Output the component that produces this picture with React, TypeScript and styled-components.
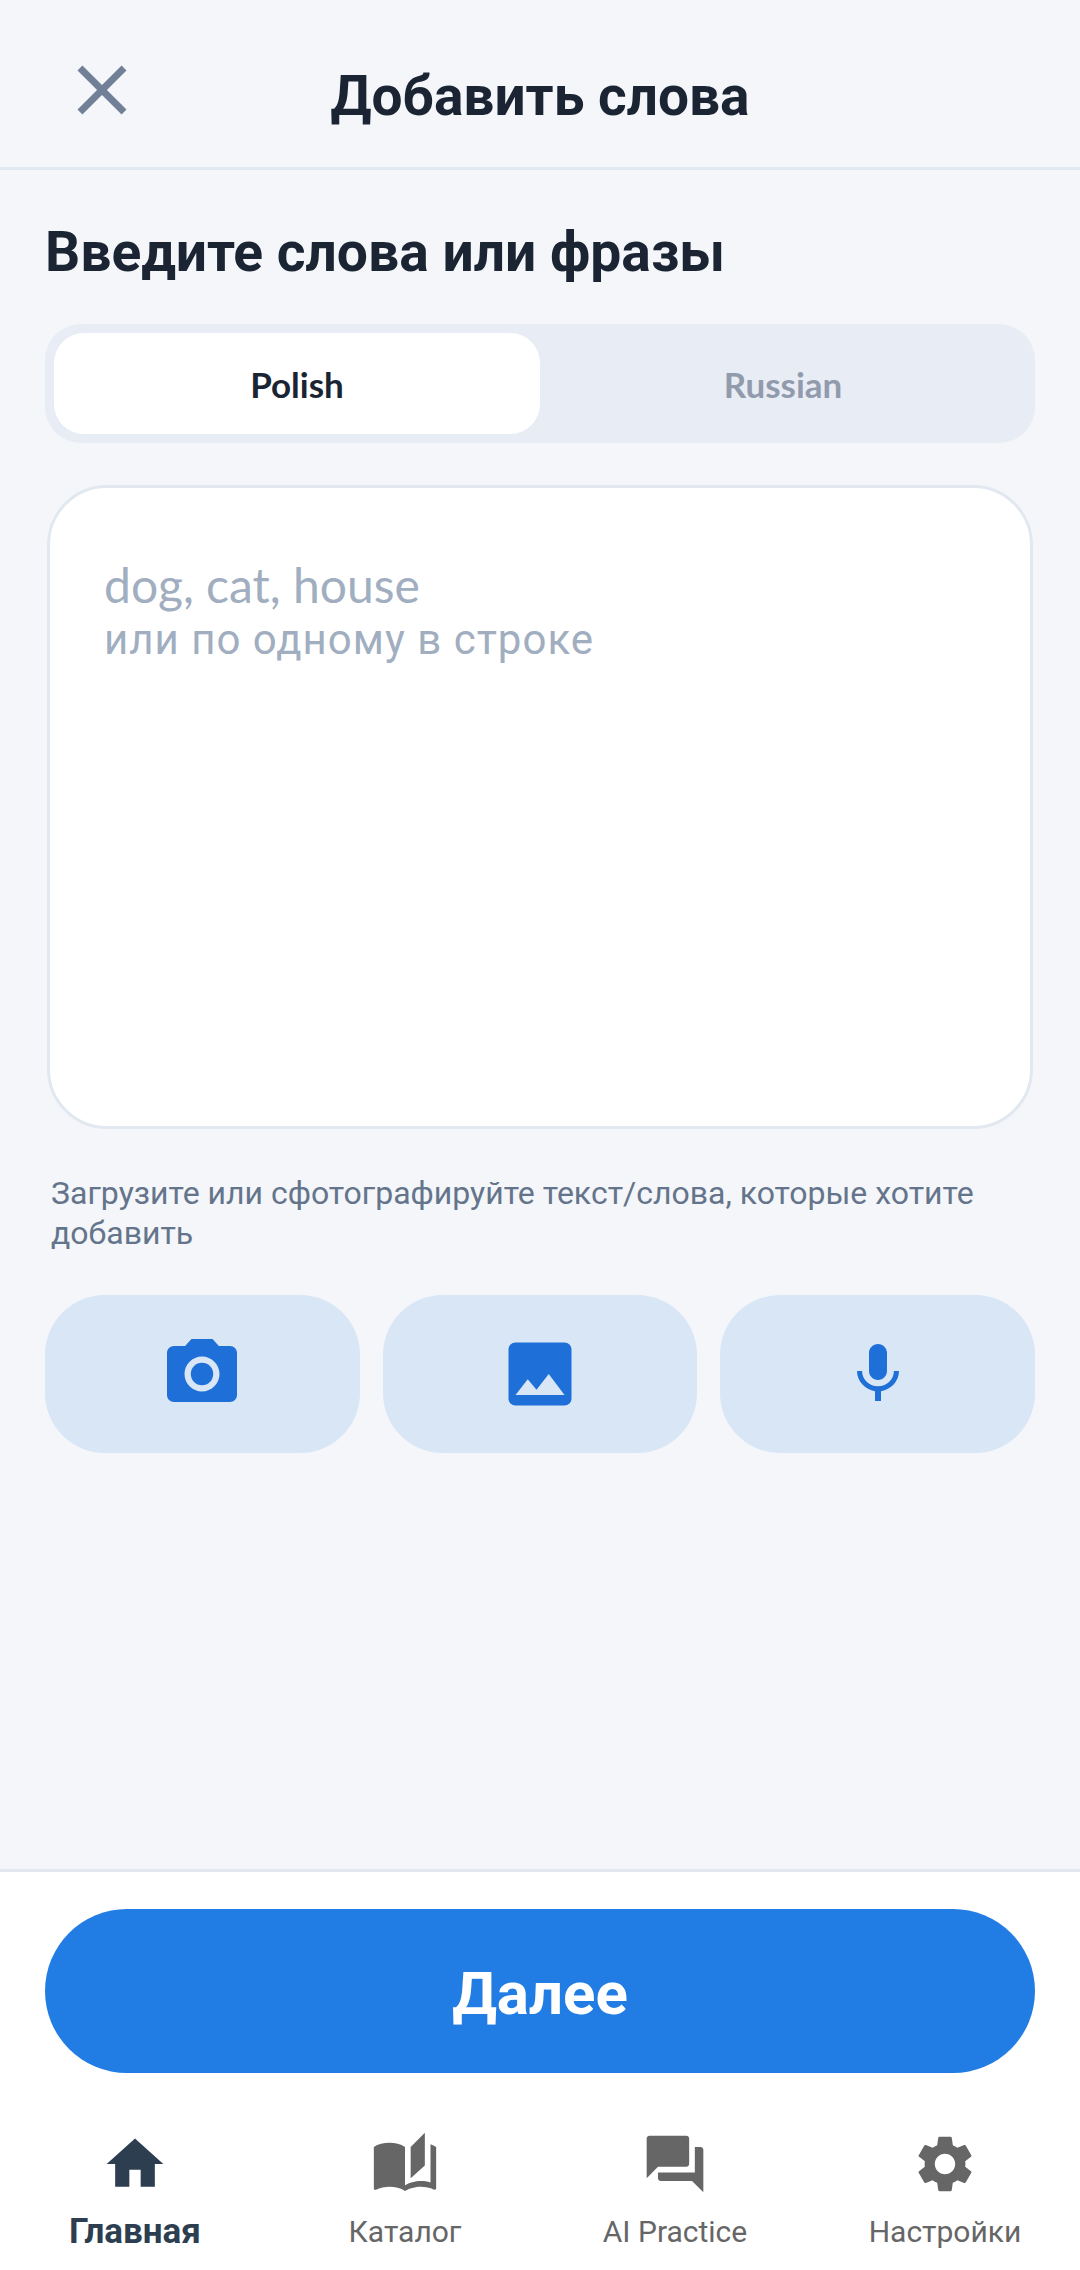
import React from 'react';
import styled, { createGlobalStyle } from 'styled-components';
import {
  MdAutoStories,
  MdClose,
  MdForum,
  MdHome,
  MdImage,
  MdMic,
  MdPhotoCamera,
  MdSettings,
} from 'react-icons/md';

const GlobalStyle = createGlobalStyle`
  html, body {
    margin: 0;
    padding: 0;
    background: #f4f6fa;
  }
  * {
    box-sizing: border-box;
  }
`;

const Screen = styled.div`
  width: 1080px;
  height: 2270px;
  display: flex;
  flex-direction: column;
  font-family: Roboto, 'Noto Sans', sans-serif;
  background: #f4f6fa;
  overflow: hidden;
`;

const Header = styled.header`
  height: 170px;
  flex: none;
  display: grid;
  grid-template-columns: 1fr auto 1fr;
  align-items: center;
  padding: 18px 60px 0;
  border-bottom: 3px solid #e2e8f0;
`;

const CloseButton = styled.div`
  display: flex;
  align-items: center;
  margin-top: -6px;
  color: #718096;
`;

const Title = styled.h1`
  margin: 6px 0 0;
  font-size: 55px;
  line-height: 70px;
  font-weight: 700;
  color: #1a2433;
`;

const Main = styled.main`
  flex: 1;
  padding: 49px 45px 0;
  display: flex;
  flex-direction: column;
`;

const Heading = styled.h2`
  margin: 0;
  font-size: 55.2px;
  line-height: 66px;
  font-weight: 700;
  color: #1a2433;
`;

const Toggle = styled.div`
  margin-top: 39px;
  height: 119px;
  padding: 9px;
  display: grid;
  grid-template-columns: 1fr 1fr;
  border-radius: 36px;
  background: #e8ecf5;
`;

const ToggleOption = styled.div<{ $active?: boolean }>`
  display: flex;
  align-items: center;
  justify-content: center;
  border-radius: 30px;
  font-family: Lato, sans-serif;
  font-size: 35px;
  font-weight: 700;
  color: ${(p) => (p.$active ? '#1a2433' : '#929bac')};
  background: ${(p) => (p.$active ? '#ffffff' : 'transparent')};
`;

const TextBox = styled.div`
  margin: 42px 2px 0;
  height: 644px;
  padding: 68px 54px 0;
  border: 3px solid #e2e8f0;
  border-radius: 60px;
  background: #ffffff;
  color: #a0aec0;
`;

const PlaceholderLatin = styled.div`
  font-family: Lato, sans-serif;
  font-size: 48px;
  line-height: 57px;
`;

const PlaceholderLine = styled.div`
  font-size: 42px;
  line-height: 54px;
  letter-spacing: 1px;
`;

const Hint = styled.p`
  margin: 44px 6px 0;
  font-size: 32px;
  line-height: 40px;
  color: #64748b;
`;

const Actions = styled.div`
  margin-top: 42px;
  display: grid;
  grid-template-columns: repeat(3, 1fr);
  gap: 23px;
`;

const ActionButton = styled.div`
  height: 158px;
  display: flex;
  align-items: center;
  justify-content: center;
  border-radius: 60px;
  background: #d8e6f6;
  color: #1f6fd9;
`;

const Footer = styled.footer`
  flex: none;
  height: 401px;
  border-top: 3px solid #e2e8f0;
  background: #ffffff;
  display: flex;
  flex-direction: column;
`;

const NextButton = styled.div`
  margin: 37px 45px 0;
  height: 164px;
  padding-top: 5px;
  display: flex;
  align-items: center;
  justify-content: center;
  border-radius: 82px;
  background: #217de3;
  color: #ffffff;
  font-size: 60px;
  font-weight: 700;
`;

const Nav = styled.nav`
  margin-top: 57px;
  display: grid;
  grid-template-columns: repeat(4, 270px);
`;

const NavItem = styled.div<{ $active?: boolean }>`
  display: flex;
  flex-direction: column;
  align-items: center;
  color: ${(p) => (p.$active ? '#2c3e50' : '#666666')};
`;

const NavLabel = styled.span<{ $active?: boolean }>`
  margin-top: 14px;
  font-size: ${(p) => (p.$active ? '35px' : '30px')};
  line-height: 40px;
  font-weight: ${(p) => (p.$active ? 700 : 400)};
`;

const navItems = [
  { label: 'Главная', Icon: MdHome, active: true },
  { label: 'Каталог', Icon: MdAutoStories, active: false },
  { label: 'AI Practice', Icon: MdForum, active: false },
  { label: 'Настройки', Icon: MdSettings, active: false },
];

export default function App() {
  return (
    <Screen>
      <GlobalStyle />
      <Header>
        <CloseButton>
          <MdClose size={84} />
        </CloseButton>
        <Title>Добавить слова</Title>
      </Header>
      <Main>
        <Heading>Введите слова или фразы</Heading>
        <Toggle>
          <ToggleOption $active>Polish</ToggleOption>
          <ToggleOption>Russian</ToggleOption>
        </Toggle>
        <TextBox>
          <PlaceholderLatin>dog, cat, house</PlaceholderLatin>
          <PlaceholderLine>или по одному в строке</PlaceholderLine>
        </TextBox>
        <Hint>Загрузите или сфотографируйте текст/слова, которые хотите добавить</Hint>
        <Actions>
          <ActionButton>
            <MdPhotoCamera size={84} />
          </ActionButton>
          <ActionButton>
            <MdImage size={84} />
          </ActionButton>
          <ActionButton>
            <MdMic size={72} />
          </ActionButton>
        </Actions>
      </Main>
      <Footer>
        <NextButton>Далее</NextButton>
        <Nav>
          {navItems.map(({ label, Icon, active }) => (
            <NavItem key={label} $active={active}>
              <Icon size={68} />
              <NavLabel $active={active}>{label}</NavLabel>
            </NavItem>
          ))}
        </Nav>
      </Footer>
    </Screen>
  );
}
